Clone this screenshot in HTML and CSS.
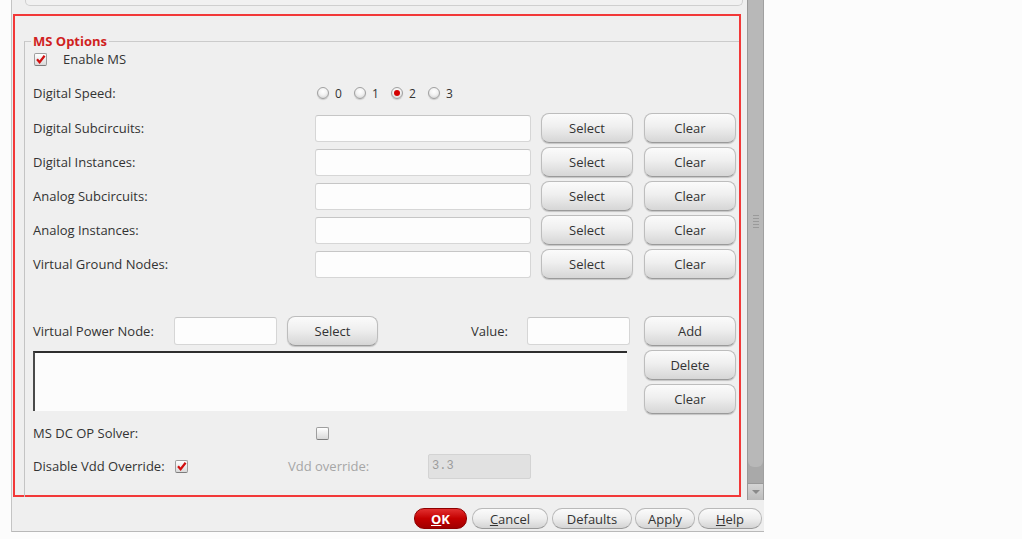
FILE: index.html
```html
<!DOCTYPE html>
<html>
<head>
<meta charset="utf-8">
<link rel="stylesheet" href="styles.css">
</head>
<body>
<div class="dialog">
  <div class="main">
    <div class="pane">
      <div class="prev-panel"></div>
      <div class="highlight">
        <div class="group">
          <div class="group-title">MS Options</div>

          <div class="row row-enable">
            <span class="check"><svg viewBox="0 0 13 13" width="13" height="13"><path d="M3 6.2 L5.6 9.2 L10.6 2.8" fill="none" stroke="#d10f0f" stroke-width="2.2"/></svg></span>
            <span class="check-label">Enable MS</span>
          </div>

          <div class="row row-speed">
            <span class="label lbl-speed">Digital Speed:</span>
            <span class="radio-item"><span class="radio"></span>0</span>
            <span class="radio-item"><span class="radio"></span>1</span>
            <span class="radio-item"><span class="radio on"></span>2</span>
            <span class="radio-item"><span class="radio"></span>3</span>
          </div>

          <div class="field-list">
            <div class="row row-field">
              <span class="label lbl-field">Digital Subcircuits:</span>
              <span class="input input-long"></span>
              <button class="btn btn-select">Select</button>
              <button class="btn btn-clear">Clear</button>
            </div>
            <div class="row row-field">
              <span class="label lbl-field">Digital Instances:</span>
              <span class="input input-long"></span>
              <button class="btn btn-select">Select</button>
              <button class="btn btn-clear">Clear</button>
            </div>
            <div class="row row-field">
              <span class="label lbl-field">Analog Subcircuits:</span>
              <span class="input input-long"></span>
              <button class="btn btn-select">Select</button>
              <button class="btn btn-clear">Clear</button>
            </div>
            <div class="row row-field">
              <span class="label lbl-field">Analog Instances:</span>
              <span class="input input-long"></span>
              <button class="btn btn-select">Select</button>
              <button class="btn btn-clear">Clear</button>
            </div>
            <div class="row row-field">
              <span class="label lbl-field">Virtual Ground Nodes:</span>
              <span class="input input-long"></span>
              <button class="btn btn-select">Select</button>
              <button class="btn btn-clear">Clear</button>
            </div>
          </div>

          <div class="row row-vpn">
            <span class="label lbl-vpn">Virtual Power Node:</span>
            <span class="input input-short"></span>
            <button class="btn btn-vpn-select">Select</button>
            <span class="label lbl-value">Value:</span>
            <span class="input input-short"></span>
            <button class="btn btn-add">Add</button>
          </div>

          <div class="list-area">
            <div class="listbox"></div>
            <div class="list-buttons">
              <button class="btn">Delete</button>
              <button class="btn">Clear</button>
            </div>
          </div>

          <div class="row row-dcop">
            <span class="label lbl-dcop">MS DC OP Solver:</span>
            <span class="check"></span>
          </div>

          <div class="row row-vdd">
            <span class="label lbl-vdd">Disable Vdd Override:</span>
            <span class="check"><svg viewBox="0 0 13 13" width="13" height="13"><path d="M3 6.2 L5.6 9.2 L10.6 2.8" fill="none" stroke="#d10f0f" stroke-width="2.2"/></svg></span>
            <span class="label lbl-vddov">Vdd override:</span>
            <span class="input input-disabled">3.3</span>
          </div>
        </div>
      </div>
    </div>
    <div class="scrollbar">
      <div class="thumb"><span class="grip"></span></div>
      <div class="track-rest"></div>
      <div class="arrow"><span class="tri"></span></div>
    </div>
  </div>
  <div class="actions">
    <button class="pill pill-ok"><u>O</u>K</button>
    <button class="pill pill-cancel"><u>C</u>ancel</button>
    <button class="pill pill-defaults">Defaults</button>
    <button class="pill pill-apply">Apply</button>
    <button class="pill pill-help"><u>H</u>elp</button>
  </div>
</div>
</body>
</html>
```

FILE: styles.css
```css
* { box-sizing: border-box; }

body {
  margin: 0;
  background: #fcfcfc;
  font-family: "Open Sans", "DejaVu Sans", sans-serif;
  font-size: 13px;
  color: #333333;
}

.dialog {
  margin-left: 11px;
  width: 753px;
  border-left: 1px solid #c4c4c4;
  background: #efefef;
}

.main {
  display: flex;
  height: 500px;
}

.pane {
  width: 735px;
}

.prev-panel {
  margin-left: 13px;
  width: 718px;
  height: 6px;
  border: 1px solid #cfcfcf;
  border-top: none;
  border-radius: 0 0 5px 5px;
  background: #f1f1f1;
}

.highlight {
  margin: 8px 0 0 1px;
  width: 728px;
  height: 483px;
  border: 2px solid #f23838;
}

.group {
  margin: 25px 0 0 9px;
  border-top: 1px solid #cbcbcb;
  border-left: 1px solid #c4c4c4;
  padding-left: 8px;
  height: 456px;
}

.group-title {
  display: block;
  width: fit-content;
  margin: -8px 0 0 -2px;
  padding: 0 2px;
  line-height: 14px;
  font-size: 13px;
  font-weight: 700;
  color: #d01f1f;
  background: #efefef;
}

.row {
  display: flex;
  align-items: center;
}

.label {
  flex: none;
  white-space: nowrap;
}

/* checkbox */
.check {
  flex: none;
  width: 13px;
  height: 13px;
  border: 1px solid #9e9e9e;
  border-bottom-color: #7d7d7d;
  border-radius: 2px;
  background: linear-gradient(#ffffff, #d9d9d9);
  display: flex;
  align-items: center;
  justify-content: center;
  overflow: visible;
}
.check svg {
  flex: none;
  margin: -1px;
}

.row-enable {
  height: 20px;
  margin-top: 1px;
}
.row-enable .check { margin-left: 1px; }
.check-label { margin-left: 16px; }

/* radios */
.row-speed {
  height: 20px;
  margin-top: 14px;
}
.lbl-speed { width: 284px; }

.radio-item {
  display: flex;
  align-items: center;
  width: 37px;
  flex: none;
  font-size: 12px;
}
.radio {
  width: 12px;
  height: 12px;
  margin-right: 6px;
  border-radius: 50%;
  border: 1px solid #a0a0a0;
  background: radial-gradient(circle at 50% 35%, #ffffff 0%, #f2f2f2 45%, #c9c9c9 100%);
  box-shadow: 0 1px 1px rgba(0,0,0,0.15);
  display: flex;
  align-items: center;
  justify-content: center;
}
.radio.on::after {
  content: "";
  width: 6px;
  height: 6px;
  border-radius: 50%;
  background: #d40000;
}

/* inputs */
.input {
  flex: none;
  display: block;
  height: 27px;
  background: #fdfdfd;
  border: 1px solid #d6d6d6;
  border-top-color: #c6c6c6;
  border-radius: 3px;
}
.input-long { width: 216px; }
.input-short { width: 103px; height: 28px; }

/* buttons */
.btn {
  flex: none;
  width: 92px;
  height: 30px;
  padding: 0;
  font-family: "Open Sans", "DejaVu Sans", sans-serif;
  font-size: 13px;
  color: #333333;
  border: 1px solid #bdbdbd;
  border-bottom-color: #9a9a9a;
  border-radius: 8px;
  background: linear-gradient(#fbfbfb 0%, #efefef 45%, #d6d6d6 100%);
  box-shadow: 0 1px 1px rgba(0,0,0,0.18);
}

.field-list {
  margin-top: 10px;
  display: flex;
  flex-direction: column;
  gap: 4px;
}
.row-field { height: 30px; }
.lbl-field { width: 282px; }
.btn-select { margin-left: 10px; }
.btn-clear { margin-left: 11px; }

/* virtual power node */
.row-vpn {
  height: 30px;
  margin-top: 37px;
}
.lbl-vpn { width: 141px; }
.btn-vpn-select { width: 91px; margin-left: 10px; }
.lbl-value {
  width: 149px;
  text-align: right;
  padding-right: 19px;
}
.btn-add { margin-left: 14px; }

.list-area {
  display: flex;
  height: 64px;
  margin-top: 4px;
}
.listbox {
  width: 594px;
  height: 60px;
  margin-top: 1px;
  background: #fcfcfc;
  border-top: 2px solid #2e2e2e;
  border-left: 2px solid #4a4a4a;
}
.list-buttons {
  margin-left: 17px;
  display: flex;
  flex-direction: column;
  gap: 4px;
}

.row-dcop {
  height: 20px;
  margin-top: 9px;
}
.lbl-dcop { width: 283px; }

.row-vdd {
  height: 26px;
  margin-top: 10px;
}
.lbl-vdd { width: 142px; }
.lbl-vddov {
  width: 140px;
  margin-left: 100px;
  color: #a6a6a6;
}
.input-disabled {
  width: 103px;
  height: 25px;
  background: #e1e1e1;
  border: 1px solid #d3d3d3;
  border-radius: 2px;
  font-family: "Liberation Mono", "DejaVu Sans Mono", monospace;
  font-size: 12px;
  color: #9c9c9c;
  line-height: 23px;
  padding-left: 3px;
}

/* scrollbar */
.scrollbar {
  width: 17px;
  background: #a9a9a9;
  border-left: 1px solid #999999;
  border-right: 1px solid #a0a0a0;
  display: flex;
  flex-direction: column;
}
.thumb {
  height: 467px;
  background: #b8b8b8;
  border-radius: 0 0 6px 6px;
  display: flex;
  justify-content: center;
}
.grip {
  margin-top: 215px;
  width: 6px;
  height: 13px;
  background: repeating-linear-gradient(#9a9a9a 0 1px, transparent 1px 3px);
}
.track-rest { flex: 1; }
.arrow {
  height: 17px;
  background: linear-gradient(#d4d4d4, #bcbcbc);
  border-top: 1px solid #999999;
  display: flex;
  align-items: center;
  justify-content: center;
}
.tri {
  width: 0;
  height: 0;
  border-left: 4px solid transparent;
  border-right: 4px solid transparent;
  border-top: 4px solid #8a8a8a;
}

/* bottom action buttons */
.actions {
  height: 32px;
  display: flex;
  justify-content: flex-end;
  padding: 8px 2px 0 0;
  border-bottom: 1px solid #b8b8b8;
}
.pill {
  flex: none;
  height: 21px;
  padding: 0;
  font-family: "Open Sans", "DejaVu Sans", sans-serif;
  font-size: 13px;
  color: #333333;
  border: 1px solid #b9b9b9;
  border-bottom-color: #999999;
  border-radius: 10px;
  background: linear-gradient(#fbfbfb 0%, #eeeeee 50%, #d4d4d4 100%);
  line-height: 18px;
}
.pill-ok {
  width: 53px;
  color: #ffffff;
  font-weight: 700;
  border-color: #8e0000;
  background: linear-gradient(#e23030 0%, #c40000 50%, #a00000 100%);
}
.pill-cancel { width: 76px; margin-left: 5px; }
.pill-defaults { width: 80px; margin-left: 4px; }
.pill-apply { width: 60px; margin-left: 3px; }
.pill-help { width: 64px; margin-left: 3px; }
```
